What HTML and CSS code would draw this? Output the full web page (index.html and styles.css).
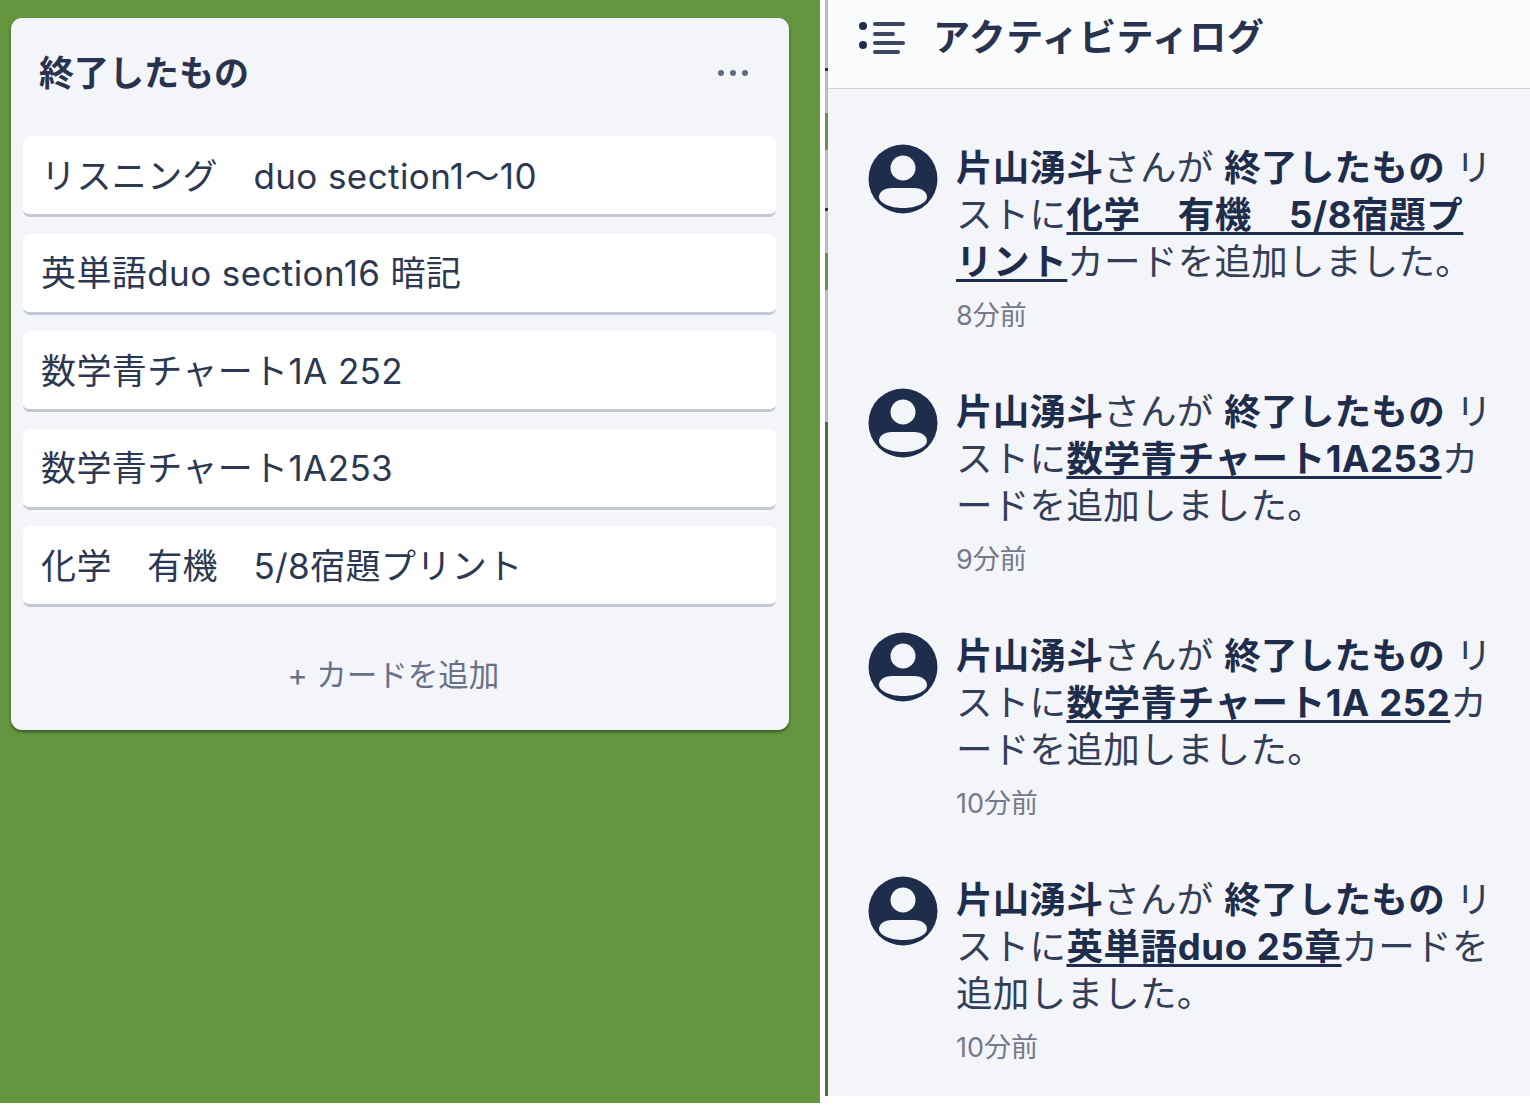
FILE: index.html
```html
<!DOCTYPE html>
<html lang="ja">
<head>
    <meta charset="UTF-8">
    <meta name="viewport" content="width=device-width, initial-scale=1.0">
    <title>終了したもの - アクティビティログ</title>
    <link rel="stylesheet" href="styles.css">
</head>
<body>
    <div class="board-side">
        <section class="list">
            <header class="list-header">
                <h2>終了したもの</h2>
                <div class="list-menu"><span></span><span></span><span></span></div>
            </header>
            <div class="card">リスニング　duo section1〜10</div>
            <div class="card">英単語duo section16 暗記</div>
            <div class="card">数学青チャート1A 252</div>
            <div class="card">数学青チャート1A253</div>
            <div class="card">化学　有機　5/8宿題プリント</div>
            <div class="add-card">+ カードを追加</div>
        </section>
    </div>

    <div class="divider"></div>

    <div class="activity-side">
        <header class="activity-header">
            <svg class="log-icon" width="48" height="36" viewBox="0 0 48 36">
                <circle cx="5" cy="7" r="4" fill="#1f2d4d"/>
                <circle cx="5" cy="26" r="4" fill="#1f2d4d"/>
                <rect x="15" y="3" width="32" height="4" rx="2" fill="#3d4760"/>
                <rect x="15" y="13" width="22" height="4" rx="2" fill="#3d4760"/>
                <rect x="15" y="22" width="32" height="4" rx="2" fill="#3d4760"/>
                <rect x="15" y="31" width="27" height="4" rx="2" fill="#3d4760"/>
            </svg>
            <h1>アクティビティログ</h1>
        </header>

        <div class="entry">
            <svg class="avatar" viewBox="0 0 70 70"><use href="#avatar-icon"/></svg>
            <div class="entry-body">
                <p><b>片山湧斗</b>さんが <b>終了したもの</b> リストに<a>化学　有機　5/8宿題プリント</a>カードを追加しました。</p>
                <div class="entry-time">8分前</div>
            </div>
        </div>
        <div class="entry">
            <svg class="avatar" viewBox="0 0 70 70"><use href="#avatar-icon"/></svg>
            <div class="entry-body">
                <p><b>片山湧斗</b>さんが <b>終了したもの</b> リストに<a>数学青チャート1A253</a>カードを追加しました。</p>
                <div class="entry-time">9分前</div>
            </div>
        </div>
        <div class="entry">
            <svg class="avatar" viewBox="0 0 70 70"><use href="#avatar-icon"/></svg>
            <div class="entry-body">
                <p><b>片山湧斗</b>さんが <b>終了したもの</b> リストに<a>数学青チャート1A 252</a>カードを追加しました。</p>
                <div class="entry-time">10分前</div>
            </div>
        </div>
        <div class="entry">
            <svg class="avatar" viewBox="0 0 70 70"><use href="#avatar-icon"/></svg>
            <div class="entry-body">
                <p><b>片山湧斗</b>さんが <b>終了したもの</b> リストに<a>英単語duo 25章</a>カードを追加しました。</p>
                <div class="entry-time">10分前</div>
            </div>
        </div>
    </div>

    <svg width="0" height="0" class="icon-defs">
        <symbol id="avatar-icon" viewBox="0 0 70 70">
            <circle cx="35" cy="35" r="34.500" fill="#1f2d4d"/>
            <circle cx="35" cy="24" r="12.500" fill="#f4f5f8"/>
            <path d="M24 44h22c8 0 13 4 13 9 0 6-11 11-24 11S11 59 11 53c0-5 5-9 13-9z" fill="#f4f5f8"/>
        </symbol>
    </svg>
</body>
</html>
```

FILE: styles.css
```css
html, body {
    margin: 0;
    padding: 0;
}

body {
    width: 1530px;
    height: 1119px;
    display: flex;
    align-items: flex-start;
    background-color: #ffffff;
    color: #1f2d4d;
    font-family: "Inter", "Noto Sans CJK JP", "Liberation Sans", sans-serif;
    overflow: hidden;
}

/* left side, the board */
.board-side {
    width: 820px;
    height: 1103px;
    box-sizing: border-box;
    padding: 18px 31px 0 11px;
    background-color: #63963f;
}

.list {
    height: 712px;
    box-sizing: border-box;
    padding: 0 13px 0 12px;
    background-color: #f4f5f8;
    border-radius: 11px;
    box-shadow: 0 2px 3px rgba(40, 60, 30, 0.7);
}

.list-header {
    height: 118px;
    display: flex;
    align-items: center;
    justify-content: space-between;
    padding: 0 28px 8px 16px;
    box-sizing: border-box;
}

.list-header h2 {
    margin: 0;
    font-size: 35px;
    font-weight: 700;
    line-height: 1;
    color: #27334f;
}

.list-menu {
    display: flex;
    gap: 6px;
}

.list-menu span {
    width: 6px;
    height: 6px;
    border-radius: 50%;
    background-color: #5f6b80;
}

.card {
    height: 81px;
    margin-bottom: 16.500px;
    padding: 0 0 4px 18px;
    display: flex;
    align-items: center;
    white-space: pre;
    background-color: #ffffff;
    border-radius: 7px;
    border-bottom: 3px solid #c3c7d6;
    box-sizing: border-box;
    font-size: 35px;
    color: #2c3852;
    letter-spacing: 0.4px;
}

.add-card {
    margin-top: 48px;
    padding-right: 12px;
    text-align: center;
    font-size: 30.500px;
    line-height: 40px;
    color: #68718a;
}

/* thin strip between the two screens */
.divider {
    width: 3px;
    height: 1096px;
    margin-left: 5px;
    background: linear-gradient(#b9bcc0 0, #b9bcc0 68px, #30343a 68px, #30343a 71px, #b9bcc0 71px, #b9bcc0 113px, #6a8f55 113px, #6a8f55 150px, #b9bcc0 150px, #b9bcc0 208px, #30343a 208px, #30343a 211px, #b9bcc0 211px, #b9bcc0 253px, #6a8f55 253px, #6a8f55 290px, #b9bcc0 290px, #b9bcc0 422px, #4c6f3a 422px);
}

/* right side, the activity log */
.activity-side {
    width: 702px;
    height: 1096px;
    background-color: #f4f5f8;
    overflow: hidden;
}

.activity-header {
    height: 89px;
    display: flex;
    align-items: center;
    padding: 0 0 14px 30px;
    box-sizing: border-box;
    gap: 27px;
    background-color: #fafbfd;
    border-bottom: 1px solid #ced1dc;
}

.activity-header h1 {
    margin: 0;
    font-size: 37px;
    font-weight: 700;
    line-height: 1;
    letter-spacing: 0.5px;
    color: #27334f;
}

.entry {
    display: flex;
    height: 244px;
    padding-left: 40px;
    gap: 18px;
}

.entry:first-of-type {
    margin-top: 55px;
}

.avatar {
    width: 70px;
    height: 70px;
    flex: none;
}

.entry-body {
    width: 538px;
    padding-top: 1px;
}

.entry-body p {
    margin: 0;
    font-size: 36.500px;
    line-height: 47px;
    letter-spacing: 0.3px;
    line-break: anywhere;
    color: #333e58;
}

.entry-body b {
    font-weight: 700;
    color: #1f2d4d;
}

.entry-body a {
    font-weight: 700;
    color: #1f2d4d;
    letter-spacing: 0.6px;
    text-decoration: underline;
    text-decoration-thickness: 3px;
    text-underline-offset: 4px;
}

.entry-time {
    margin-top: 12px;
    font-size: 27px;
    line-height: 36px;
    color: #75798a;
}

.icon-defs {
    position: absolute;
}
```
